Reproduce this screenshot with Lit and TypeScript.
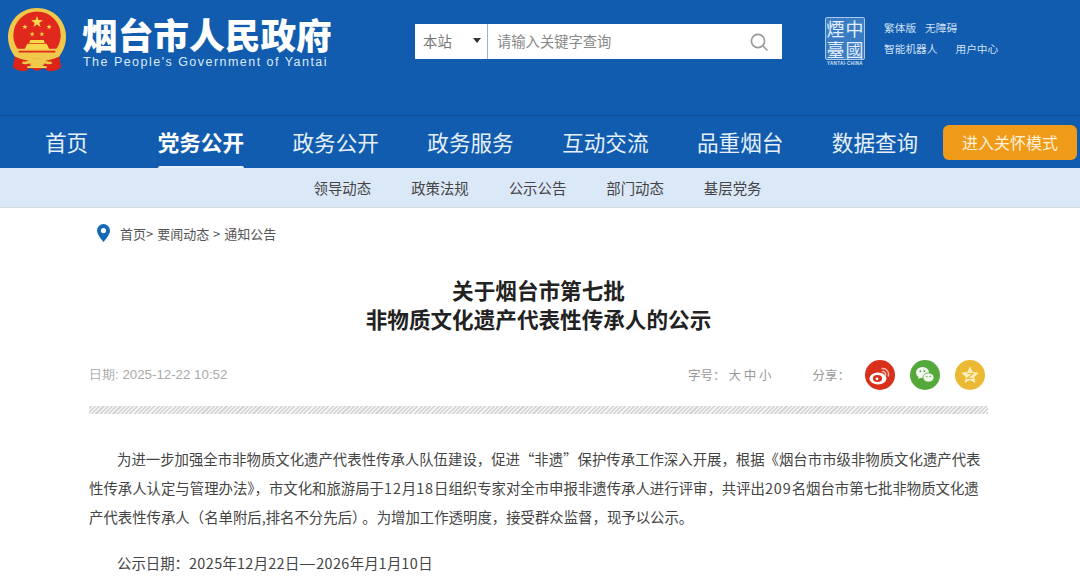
import { LitElement, html, css } from "lit";
import { customElement } from "lit/decorators.js";

const NAV = ["首页", "党务公开", "政务公开", "政务服务", "互动交流", "品重烟台", "数据查询"];
const SUB = ["领导动态", "政策法规", "公示公告", "部门动态", "基层党务"];
const BODY = [
  "为进一步加强全市非物质文化遗产代表性传承人队伍建设，促进“非遗”保护传承工作深入开展，根据《烟台市市级非物质文化遗产代表",
  "性传承人认定与管理办法》，市文化和旅游局于12月18日组织专家对全市申报非遗传承人进行评审，共评出209名烟台市第七批非物质文化遗",
];

const digits = (t: string) =>
  t.split(/(\d+)/).map((p) => (/^\d+$/.test(p) ? html`<span class="num">${p}</span>` : p));

const star = (x: number, y: number, r: number) => {
  const pts: string[] = [];
  for (let i = 0; i < 10; i++) {
    const a = -Math.PI / 2 + (i * Math.PI) / 5;
    const d = i % 2 ? r * 0.4 : r;
    pts.push(`${(x + d * Math.cos(a)).toFixed(2)},${(y + d * Math.sin(a)).toFixed(2)}`);
  }
  return pts.join(" ");
};

const emblem = html`<svg class="emblem" viewBox="0 0 60 66" aria-hidden="true">
  <path d="M30 0C13 0 0 13 0 30c0 9 4 18 12 26h36c8-8 12-17 12-26C60 13 47 0 30 0z" fill="#f0c94a"/>
  <circle cx="30" cy="28" r="24.5" fill="#e0281c"/>
  <polygon points="${star(30, 14.5, 6.4)}" fill="#f7d84a"/>
  <polygon points="${star(17.5, 19.5, 2.9)}" fill="#f7d84a"/>
  <polygon points="${star(42.5, 19.5, 2.9)}" fill="#f7d84a"/>
  <polygon points="${star(25, 27, 2.7)}" fill="#f7d84a"/>
  <polygon points="${star(35, 27, 2.7)}" fill="#f7d84a"/>
  <path d="M23 33h14l1 3h-16zM20 37h20l3 6H17z" fill="#f7d84a"/>
  <path d="M6 42h48v2c-5 5-14 8-24 8S11 49 6 44z" fill="#f0c94a"/>
  <path d="M11 44h38v2H11z" fill="#e0281c"/>
  <path d="M7 50c6 3 14 5 23 5s17-2 23-5l2 11c-3 3-8 5-13 4l-5-3-7 3-7-3-5 3c-5 1-10-1-13-4z" fill="#dc2418"/>
  <path d="M22 52h16v2c3 1 4 2 6 1l2 2c-3 2-6 1-8 0l-2 3h-12l-2-3c-2 1-5 2-8 0l2-2c2 1 3 0 6-1z" fill="#f0c94a"/>
  <path d="M20 60h20v2H20z" fill="#f7d84a"/>
</svg>`;

@customElement("app-root")
export class AppRoot extends LitElement {
  static styles = css`
    :host { display: block; width: 1080px; height: 576px; overflow: hidden; background: #fff;
      font-family: "Noto Sans CJK SC", "Liberation Sans", sans-serif; color: #444; }
    .header { height: 115px; background: #115cae; display: flex; align-items: flex-start; border-bottom: 1px solid #0d4c94; }
    .brand { display: flex; gap: 16px; padding: 8px 0 0 8px; width: 415px; flex: none; box-sizing: border-box; }
    .emblem { width: 58px; height: 64px; flex: none; }
    .brand-text { display: flex; flex-direction: column; color: #fff; }
    .brand-cn { font-size: 35.7px; font-weight: 900; line-height: 40px; margin-top: 6px; white-space: nowrap; }
    .brand-en { font-family: "Liberation Sans", sans-serif; font-size: 12.5px; line-height: 16px; letter-spacing: 1.47px; color: #dbe9f7; white-space: nowrap; margin-left: 1px; }
    .search { margin-top: 24px; width: 367px; height: 35px; display: flex; background: #fff; align-items: center; flex: none; }
    .scope { width: 73px; height: 35px; flex: none; display: flex; align-items: center; box-sizing: border-box; padding: 0 6px 2px 8px; border-right: 1px solid #9db4cf;
      font-size: 14.4px; color: #777; justify-content: space-between; }
    .caret { width: 0; height: 0; border: 4px solid transparent; border-top: 5px solid #333; border-bottom: 0; }
    .placeholder { flex: 1; padding: 0 0 2px 9px; font-size: 14.3px; color: #888; white-space: nowrap; }
    .glass { width: 20px; height: 20px; margin-right: 13px; flex: none; }
    .seal-wrap { margin: 17px 0 0 43px; width: 40px; flex: none; display: flex; flex-direction: column; align-items: center; }
    .seal { width: 40px; height: 43px; box-sizing: border-box; border: 1px solid #a9c8ea; border-radius: 2px; display: grid; grid-template-columns: 1fr 1fr; grid-template-rows: 1fr 1fr;
      font-family: "Noto Sans CJK TC", serif; font-size: 18px; line-height: 20px; color: #e3eefa; text-align: center; background: #3a7cc4; }
    .seal-en { font-family: "Liberation Sans", sans-serif; font-size: 4.5px; font-weight: 700; line-height: 6px; color: #d4e3f3; white-space: nowrap; letter-spacing: .35px; margin-top: 1px; }
    .tools { margin: 20px 0 0 19px; display: flex; flex-direction: column; gap: 5px; font-size: 10.7px; line-height: 16px; color: #cfe0f3; white-space: nowrap; }
    .tools div { display: flex; }
    .gap-a { margin-left: 9px; }
    .gap-b { margin-left: 18px; }
    .nav { height: 52px; background: #115cae; display: flex; align-items: stretch; padding: 0 3px 0 45px; justify-content: space-between; }
    .links { display: flex; gap: 48.45px; }
    .nav-item { font-size: 21.6px; color: #e6f0fa; display: flex; align-items: center; white-space: nowrap; position: relative; flex: none; padding-bottom: 2px; }
    .nav-item.home { margin-right: 21px; }
    .nav-item.active { font-weight: 700; color: #fff; }
    .nav-item.active::after { content: ""; position: absolute; left: 0; right: 0; bottom: 0; height: 2px; background: #eaf3fc; border-radius: 2px 2px 0 0; }
    .care { margin-top: 9px; width: 134px; height: 35px; flex: none; border-radius: 6px; background: #f09a1a; color: #fff1d6; font-size: 16px; padding-bottom: 1px; box-sizing: border-box;
      display: flex; align-items: center; justify-content: center; white-space: nowrap; }
    .subnav { height: 39px; background: #dbe8f8; border-bottom: 1px solid #d3d9df; display: flex; justify-content: center; gap: 40px; align-items: center;
      font-size: 14.4px; color: #444; padding-right: 5px; }
    .main { padding: 0 92px 0 89px; }
    .crumbs { display: flex; align-items: center; height: 50px; margin-left: 8px; font-size: 13px; color: #555; white-space: pre; word-spacing: 1px; }
    .pin { width: 13px; height: 18px; margin-right: 10px; flex: none; }
    .title { margin-top: 17px; text-align: center; font-size: 21.6px; line-height: 29px; font-weight: 700; color: #222; }
    .meta { margin-top: 27px; height: 30px; display: flex; align-items: center; font-size: 12.5px; color: #aaa; }
    .date { flex: 1; font-family: "Liberation Sans", sans-serif; font-size: 13.3px; }
    .font-size { color: #999; margin-bottom: 2px; }
    .share { margin-left: 41px; color: #999; margin-bottom: 2px; }
    .circles { display: flex; gap: 15px; margin: 0 3px 0 15px; }
    .circles svg { width: 30px; height: 30px; display: block; }
    .stripe { margin-top: 16px; height: 8px; background: repeating-linear-gradient(-45deg, #d4d4d4 0 1.5px, #f4f4f4 1.5px 3px); }
    .body { margin-top: 30px; font-size: 14.4px; line-height: 29px; color: #444; }
    .body div { white-space: nowrap; }
    .first { text-indent: 28px; }
    .num { letter-spacing: .9px; }
    .close { margin-right: 3px; }
    .dash { display: inline-block; text-indent: 0; margin: 0 2px; transform: scaleX(1.3); }
    .date-line { margin-top: 17px; text-indent: 28px; }
    .date-line .num { letter-spacing: .4px; }
  `;

  render() {
    return html`
      <div class="header">
        <div class="brand">
          ${emblem}
          <div class="brand-text">
            <div class="brand-cn">烟台市人民政府</div>
            <div class="brand-en">The People's Government of Yantai</div>
          </div>
        </div>
        <div class="search">
          <div class="scope"><span>本站</span><span class="caret"></span></div>
          <div class="placeholder">请输入关键字查询</div>
          <svg class="glass" viewBox="0 0 20 20" fill="none" stroke="#999" stroke-width="1.6"><circle cx="9" cy="9" r="6.6"/><path d="M14 14l4 4" stroke-linecap="round"/></svg>
        </div>
        <div class="seal-wrap">
          <div class="seal"><span>煙</span><span>中</span><span>臺</span><span>國</span></div>
          <div class="seal-en">YANTAI·CHINA</div>
        </div>
        <div class="tools">
          <div><span>繁体版</span><span class="gap-a">无障碍</span></div>
          <div><span>智能机器人</span><span class="gap-b">用户中心</span></div>
        </div>
      </div>
      <div class="nav">
        <div class="links">
          ${NAV.map((n, i) => html`<div class="nav-item ${i === 1 ? "active" : ""} ${i === 0 ? "home" : ""}">${n}</div>`)}
        </div>
        <div class="care">进入关怀模式</div>
      </div>
      <div class="subnav">${SUB.map((s) => html`<span>${s}</span>`)}</div>
      <div class="main">
        <div class="crumbs">
          <svg class="pin" viewBox="0 0 13 18"><path fill-rule="evenodd" d="M6.5 0A6.5 6.5 0 0 0 0 6.5C0 11 6.5 18 6.5 18S13 11 13 6.5A6.5 6.5 0 0 0 6.5 0zm0 4a2.6 2.6 0 1 1 0 5.2 2.6 2.6 0 0 1 0-5.2z" fill="#1668b8"/></svg>
          <span>首页&gt; 要闻动态 &gt; 通知公告</span>
        </div>
        <div class="title">关于烟台市第七批<br />非物质文化遗产代表性传承人的公示</div>
        <div class="meta">
          <span class="date">日期: 2025-12-22 10:52</span>
          <span class="font-size">字号： 大 中 小</span>
          <span class="share">分享：</span>
          <div class="circles">
            <svg viewBox="0 0 30 30"><circle cx="15" cy="15" r="15" fill="#d9301c"/><ellipse cx="13" cy="18.5" rx="8.5" ry="6" fill="#fff"/><ellipse cx="12.5" cy="18.5" rx="4.6" ry="3.4" fill="#d9301c"/><circle cx="12" cy="18.8" r="1.4" fill="#fff"/><path d="M17 8.6a6 6 0 0 1 6.5 7.5M17.4 11.6a3 3 0 0 1 3.2 3.8" fill="none" stroke="#f6b8a8" stroke-width="1.5" stroke-linecap="round"/></svg>
            <svg viewBox="0 0 30 30"><circle cx="15" cy="15" r="15" fill="#55a83a"/><ellipse cx="12.5" cy="12.5" rx="6.5" ry="5.5" fill="#f2f8ee"/><path d="M9 16l-1 3 3.5-1.6z" fill="#f2f8ee"/><ellipse cx="18.5" cy="17.5" rx="5.5" ry="4.6" fill="#f2f8ee" stroke="#55a83a" stroke-width=".8"/><circle cx="10.4" cy="11.2" r=".9" fill="#55a83a"/><circle cx="14.4" cy="11.2" r=".9" fill="#55a83a"/><circle cx="16.8" cy="16.5" r=".7" fill="#55a83a"/><circle cx="20.2" cy="16.5" r=".7" fill="#55a83a"/></svg>
            <svg viewBox="0 0 30 30"><circle cx="15" cy="15" r="15" fill="#ecb935"/><path d="M15 6.5l2.6 5.6 6.1.7-4.5 4.2 1.2 6-5.4-3-5.4 3 1.2-6-4.5-4.2 6.1-.7z" fill="#fbeec0"/><path d="M12 13.5h6l-6 5h6" fill="none" stroke="#ecb935" stroke-width="1.2"/></svg>
          </div>
        </div>
        <div class="stripe"></div>
        <div class="body">
          ${BODY.map((l, i) => html`<div class="${i === 0 ? "first" : ""}">${digits(l)}</div>`)}
          <div>产代表性传承人（名单附后,排名不分先后<span class="close">）</span>。为增加工作透明度，接受群众监督，现予以公示。</div>
          <div class="date-line">公示日期：${digits("2025年12月22日")}<span class="dash">—</span>${digits("2026年月1月10日")}</div>
        </div>
      </div>
    `;
  }
}
